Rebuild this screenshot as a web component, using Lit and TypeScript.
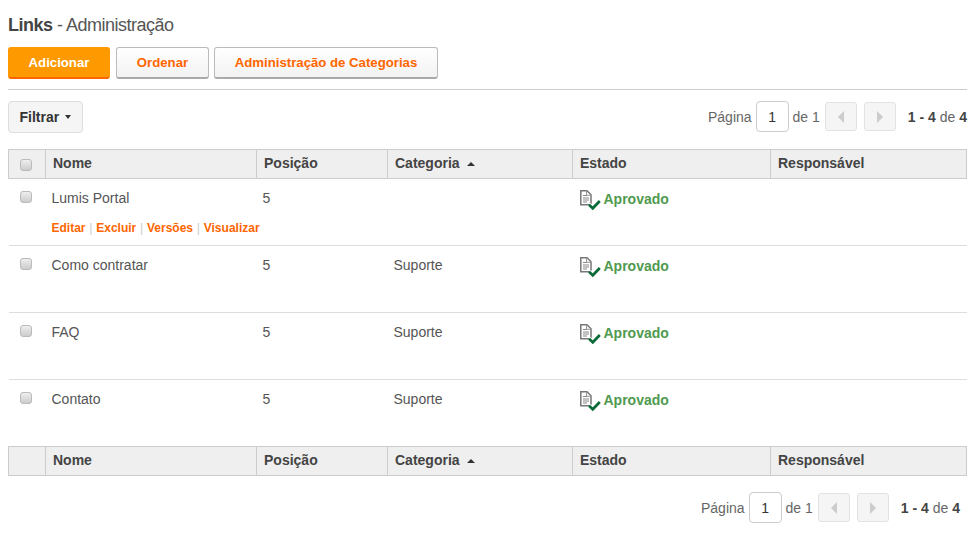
import { LitElement, html, css, svg } from "lit";
import { customElement } from "lit/decorators.js";

const rows = [
  { name: "Lumis Portal", pos: "5", cat: "", actions: true },
  { name: "Como contratar", pos: "5", cat: "Suporte", actions: false },
  { name: "FAQ", pos: "5", cat: "Suporte", actions: false },
  { name: "Contato", pos: "5", cat: "Suporte", actions: false },
];

const stateIcon = svg`<svg class="state-icon" width="22" height="22" viewBox="0 0 22 22">
  <path d="M1.8 1.8H8L12 5.8V15.7H1.8Z" fill="#fff" stroke="#777" stroke-width="1.5"/>
  <path d="M7.5 1.8V6.3H12" fill="none" stroke="#999" stroke-width="1"/>
  <path d="M4 6.5H8M4 9H10M4 11H10M4 13H8" stroke="#888" stroke-width="1"/>
  <path d="M10 16L14 19.5L21 12" fill="none" stroke="#fff" stroke-width="5"/>
  <path d="M10 15.7L13.8 19.3L20.8 12" fill="none" stroke="#0a6b38" stroke-width="2.7"/>
</svg>`;

@customElement("app-root")
export class AppRoot extends LitElement {
  static styles = css`
    :host { display: block; padding: 0 8px; font-family: "Liberation Sans", Arial, sans-serif; font-size: 14px; color: #555; box-sizing: border-box; width: 975px; height: 544px; overflow: hidden; background: #fff; }
    h1 { margin: 0; padding-top: 14px; height: 47px; line-height: 22px; font-size: 18px; font-weight: 400; letter-spacing: -0.5px; color: #555; box-sizing: border-box; }
    h1 b { color: #444; }
    .actions { display: flex; height: 33px; padding-bottom: 9px; border-bottom: 1px solid #ccc; }
    .btn { box-sizing: border-box; height: 32px; border: 1px solid #bbb; border-bottom: 2px solid #aaa; border-radius: 3px; background: linear-gradient(#fff, #f2f2f2); color: #ff6600; font: bold 13.2px "Liberation Sans", Arial, sans-serif; padding: 0; }
    .btn.primary { background: #ff9900; border-color: #ff9900; border-bottom-color: #ff6600; color: #fff; width: 102px; margin-right: 6px; }
    .btn.order { width: 93px; margin-right: 5px; }
    .btn.cats { width: 224px; }
    .toolbar { display: flex; justify-content: space-between; align-items: flex-start; padding-top: 11px; height: 59px; box-sizing: border-box; }
    .filter { box-sizing: border-box; display: flex; align-items: center; gap: 6px; width: 75px; height: 32px; padding-left: 10.5px; background: #f5f5f5; border: 1px solid #ddd; border-radius: 4px; color: #333; font: bold 14px "Liberation Sans", Arial, sans-serif; }
    .caret { width: 0; height: 0; border-left: 3px solid transparent; border-right: 3px solid transparent; border-top: 4px solid #333; }
    .pager { display: flex; align-items: center; color: #666; height: 31px; }
    .page-input { box-sizing: border-box; width: 33px; height: 31px; margin: 0 4px; display: flex; align-items: center; justify-content: center; border: 1px solid #ccc; border-radius: 4px; color: #333; background: #fff; }
    .nav { box-sizing: border-box; width: 32px; height: 29px; display: flex; align-items: center; justify-content: center; background: #f5f5f5; border: 1px solid #e2e2e2; border-radius: 3px; margin-left: 5px; }
    .nav + .nav { margin-left: 7px; }
    .tri { width: 0; height: 0; border-top: 6px solid transparent; border-bottom: 6px solid transparent; }
    .tri.left { border-right: 6px solid #ccc; }
    .tri.right { border-left: 6px solid #ccc; }
    .total { margin-left: 12px; }
    .total b { color: #444; }
    table { width: 959px; table-layout: fixed; border-collapse: collapse; }
    th { height: 29px; padding: 0 0 3px 7px; box-sizing: border-box; text-align: left; background: #efefef; border: 1px solid #ccc; color: #444; font-size: 14px; font-weight: bold; }
    th.check { padding: 0; text-align: center; vertical-align: top; }
    .sort { display: inline-block; margin-left: 4px; vertical-align: 2px; border-left: 4px solid transparent; border-right: 4px solid transparent; border-bottom: 4px solid #333; }
    td { height: 67px; box-sizing: border-box; vertical-align: top; padding: 10px 0 0 6px; border-bottom: 1px solid #ddd; color: #555; line-height: 18px; }
    tbody tr:last-child td { border-bottom: 0; }
    td.check { padding: 12px 0 0 11px; }
    .cb { display: block; box-sizing: border-box; width: 12px; height: 12px; border: 1px solid #bbb; border-radius: 3px; background: linear-gradient(#eee, #ccc); }
    th .cb { margin: 9px 0 0 11px; }
    .name { height: 31px; }
    .row-actions { font-size: 12px; font-weight: bold; color: #ff6600; line-height: 16px; white-space: nowrap; display: flex; }
    .sep { color: #ccc; font-weight: 400; padding: 0 3.8px; }
    .state { display: flex; align-items: flex-start; gap: 3px; color: #4f9a4f; font-weight: bold; line-height: 20px; }
    .state-icon { flex: none; }
    .bottom { display: flex; justify-content: flex-end; padding: 16px 7px 0 0; }
  `;

  private pager() {
    return html`<div class="pager">
      Página <span class="page-input">1</span> de 1
      <span class="nav"><span class="tri left"></span></span>
      <span class="nav"><span class="tri right"></span></span>
      <span class="total"><b>1 - 4</b> de <b>4</b></span>
    </div>`;
  }

  private head(check: boolean) {
    return html`<tr>
      <th class="check">${check ? html`<span class="cb"></span>` : ""}</th>
      <th>Nome</th><th>Posição</th>
      <th>Categoria <span class="sort"></span></th>
      <th>Estado</th><th>Responsável</th>
    </tr>`;
  }

  render() {
    return html`
      <h1><b>Links</b> - Administração</h1>
      <div class="actions">
        <button class="btn primary">Adicionar</button>
        <button class="btn order">Ordenar</button>
        <button class="btn cats">Administração de Categorias</button>
      </div>
      <div class="toolbar">
        <button class="filter">Filtrar <span class="caret"></span></button>
        ${this.pager()}
      </div>
      <table>
        <colgroup><col style="width:37px"/><col style="width:211px"/><col style="width:131px"/><col style="width:185px"/><col style="width:198px"/><col/></colgroup>
        <thead>${this.head(true)}</thead>
        <tbody>
          ${rows.map((r) => html`<tr>
            <td class="check"><span class="cb"></span></td>
            <td>
              <div class="name">${r.name}</div>
              ${r.actions ? html`<div class="row-actions">Editar<span class="sep">|</span>Excluir<span class="sep">|</span>Versões<span class="sep">|</span>Visualizar</div>` : ""}
            </td>
            <td>${r.pos}</td>
            <td>${r.cat}</td>
            <td><div class="state">${stateIcon}Aprovado</div></td>
            <td></td>
          </tr>`)}
        </tbody>
        <tfoot>${this.head(false)}</tfoot>
      </table>
      <div class="bottom">${this.pager()}</div>
    `;
  }
}
